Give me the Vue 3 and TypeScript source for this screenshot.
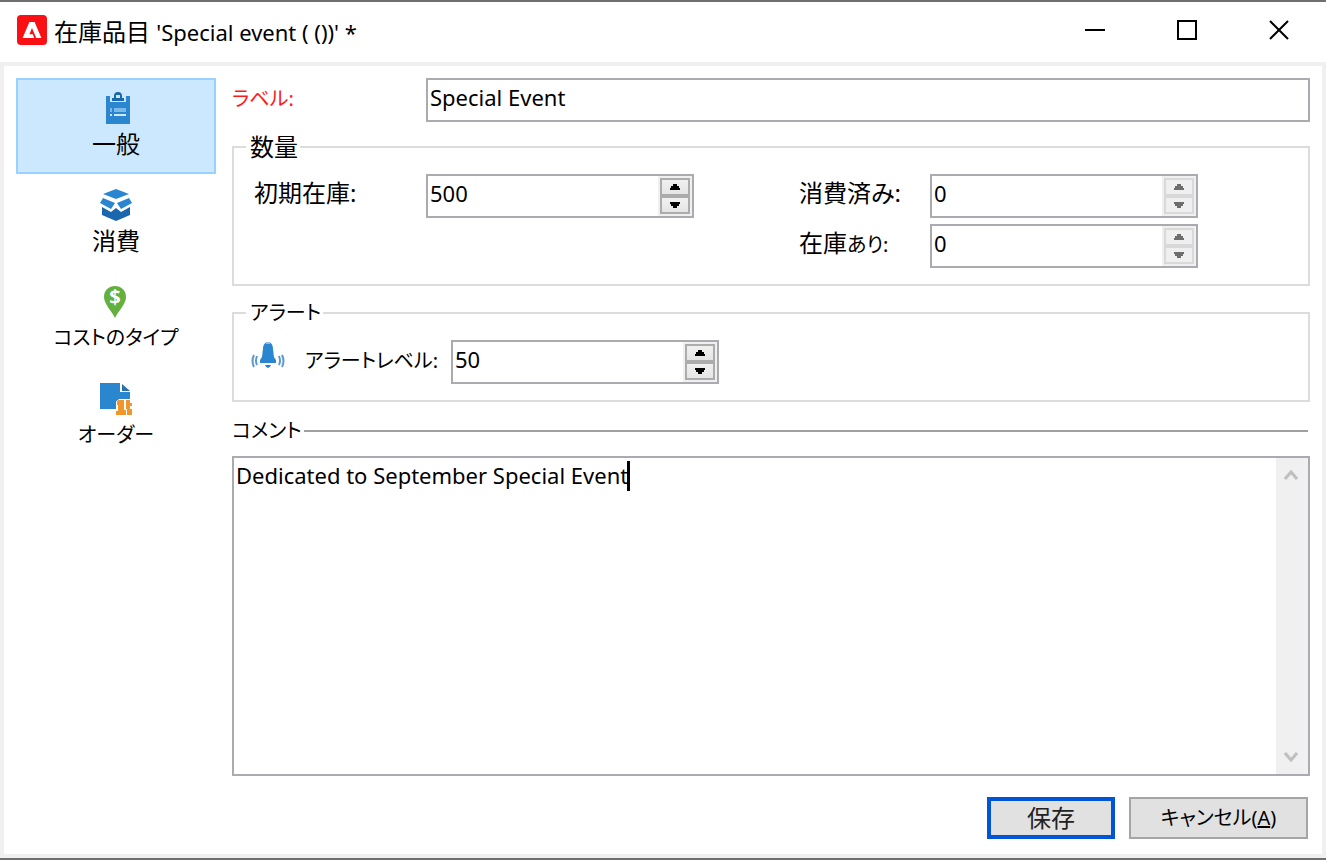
<script setup lang="ts">
import { nextTick, onMounted, ref, watch } from 'vue'

type TabId = 'general' | 'consumption' | 'costs' | 'orders'

interface Tab {
  id: TabId
  label: string
  kana: boolean
}

const tabs: Tab[] = [
  { id: 'general', label: '一般', kana: false },
  { id: 'consumption', label: '消費', kana: false },
  { id: 'costs', label: 'コストのタイプ', kana: true },
  { id: 'orders', label: 'オーダー', kana: true },
]

const activeTab = ref<TabId>('general')
const label = ref('Special Event')
const initialStock = ref(500)
const consumed = ref(0)
const available = ref(0)
const alertLevel = ref(50)
const comment = ref('Dedicated to September Special Event')

const commentBox = ref<HTMLTextAreaElement | null>(null)
const caretLeft = ref(0)

// Places the caret bar after the last character of the comment.
function placeCaret(): void {
  const box = commentBox.value
  const context = document.createElement('canvas').getContext('2d')
  if (!box || !context) return
  const style = getComputedStyle(box)
  context.font = `${style.fontSize} ${style.fontFamily}`
  const lastLine = comment.value.split('\n').pop() ?? ''
  caretLeft.value = Math.round(context.measureText(lastLine).width + parseFloat(style.paddingLeft)) - 1
}

onMounted(() => nextTick(placeCaret))
watch(comment, placeCaret)
</script>

<template>
  <div class="window">
    <header class="titlebar">
      <svg class="logo" viewBox="0 0 30 30" aria-hidden="true">
        <rect width="30" height="30" rx="4" fill="#fa0f14" />
        <path d="M12.4 7h5.2l6.8 16h-5.2l-4.2-10-2.6 6.2h3.4l1.4 3.8H5.6z" fill="#fff" />
      </svg>
      <h1 class="title">在庫品目 <span class="latin">'Special event ( ())' *</span></h1>
      <div class="window-controls">
        <button type="button" aria-label="最小化">
          <svg viewBox="0 0 20 20"><path d="M0 10h20" /></svg>
        </button>
        <button type="button" aria-label="最大化">
          <svg viewBox="0 0 20 20"><rect x="1" y="1" width="18" height="18" /></svg>
        </button>
        <button type="button" aria-label="閉じる">
          <svg viewBox="0 0 20 20"><path d="M1 1l18 18M19 1L1 19" /></svg>
        </button>
      </div>
    </header>

    <div class="body">
      <nav class="tabs">
        <button
          v-for="tab in tabs"
          :key="tab.id"
          type="button"
          class="tab"
          :class="{ active: tab.id === activeTab }"
          @click="activeTab = tab.id"
        >
          <svg v-if="tab.id === 'general'" class="icon" viewBox="0 0 32 32" aria-hidden="true">
            <path d="M6 4h4v6h16V4h4v28H6z" fill="#2a87cf" />
            <path d="M12 9V6h2V4q0-4 4-4t4 4v2h2v3zM16 3v3h4V3z" fill="#1a67ad" fill-rule="evenodd" />
            <path d="M10 16h2v4h-2zM14 16h12v4H14z" fill="#7db9e8" />
            <path d="M10 22h2v2h-2zM14 22h12v2H14z" fill="#cfe8fb" />
          </svg>
          <svg v-else-if="tab.id === 'consumption'" class="icon" viewBox="0 0 32 32" aria-hidden="true">
            <path d="M3 5l13-5 13 5-13 5z" fill="#2a87cf" />
            <path d="M3 9l12 5-4 6-11-6zM29 9l-12 5 4 6 11-6z" fill="#2a87cf" />
            <path d="M2 18l9 5 5-4 5 4 9-5v8l-14 6-14-6z" fill="#1a67ad" />
          </svg>
          <svg v-else-if="tab.id === 'costs'" class="icon" viewBox="0 0 32 32" aria-hidden="true">
            <path d="M15 0c6 0 11 4 11 11 0 7-7 13-11 21C11 24 4 18 4 11 4 4 9 0 15 0z" fill="#64b03f" />
            <text x="15" y="18" text-anchor="middle" class="coin-sign">$</text>
          </svg>
          <svg v-else class="icon" viewBox="0 0 32 32" aria-hidden="true">
            <path d="M0 0h20v9h10v7H19v2h-3v8H0z" fill="#2a87cf" />
            <path d="M22 1l8 7h-8z" fill="#2d6fa8" />
            <path
              d="M18 17h6v10h2v5H16v-4h2v-6h-1v-4zM26 17h4v3h2v3h-2v3h2v6h-5v-6h-1z"
              fill="#f0962a"
              stroke="#fff"
              stroke-width="1"
              paint-order="stroke"
            />
          </svg>
          <span :class="{ kana: tab.kana }">{{ tab.label }}</span>
        </button>
      </nav>

      <form class="main" @submit.prevent>
        <div class="label-row">
          <label class="required kana" for="item-label">ラベル:</label>
          <input id="item-label" v-model="label" class="field" type="text" />
        </div>

        <fieldset class="group quantity">
          <legend>数量</legend>
          <div class="quantity-grid">
            <label for="initial-stock">初期在庫:</label>
            <div class="spinner">
              <input id="initial-stock" v-model.number="initialStock" type="text" inputmode="numeric" />
              <div class="steps">
                <button type="button" aria-label="増やす" @click="initialStock++">
                  <svg viewBox="0 0 10 6"><path d="M3 0h4v2h2v2h1v2H0V4h1V2h2z" /></svg>
                </button>
                <button type="button" aria-label="減らす" @click="initialStock--">
                  <svg viewBox="0 0 10 6"><path d="M0 0h10v2H9v2H7v2H3V4H1V2H0z" /></svg>
                </button>
              </div>
            </div>
            <label class="second" for="consumed">消費済み:</label>
            <div class="spinner disabled">
              <input id="consumed" v-model.number="consumed" type="text" readonly />
              <div class="steps">
                <button type="button" aria-label="増やす" disabled>
                  <svg viewBox="0 0 10 6"><path d="M3 0h4v2h2v2h1v2H0V4h1V2h2z" /></svg>
                </button>
                <button type="button" aria-label="減らす" disabled>
                  <svg viewBox="0 0 10 6"><path d="M0 0h10v2H9v2H7v2H3V4H1V2H0z" /></svg>
                </button>
              </div>
            </div>
            <label class="second" for="available">在庫<span class="kana">あり:</span></label>
            <div class="spinner disabled">
              <input id="available" v-model.number="available" type="text" readonly />
              <div class="steps">
                <button type="button" aria-label="増やす" disabled>
                  <svg viewBox="0 0 10 6"><path d="M3 0h4v2h2v2h1v2H0V4h1V2h2z" /></svg>
                </button>
                <button type="button" aria-label="減らす" disabled>
                  <svg viewBox="0 0 10 6"><path d="M0 0h10v2H9v2H7v2H3V4H1V2H0z" /></svg>
                </button>
              </div>
            </div>
          </div>
        </fieldset>

        <fieldset class="group alert">
          <legend class="kana">アラート</legend>
          <div class="alert-row">
            <svg class="icon" viewBox="0 0 32 32" aria-hidden="true">
              <path d="M16 2c-3 0-5 3-5 7-1 5 0 8-3 11v3h16v-3c-3-3-2-6-3-11 0-4-2-7-5-7z" fill="#2a87cf" />
              <path d="M13 25h6q-1 3-3 3t-3-3z" fill="#2a87cf" />
              <path d="M14 2h4v2h-4z" fill="#8fc2ea" />
              <path
                d="M2 15q-3 6 0 12M5 16q-2 5 0 9M30 15q3 6 0 12M27 16q2 5 0 9"
                fill="none"
                stroke="#5c98cc"
                stroke-width="2"
              />
            </svg>
            <label class="kana" for="alert-level">アラートレベル:</label>
            <div class="spinner">
              <input id="alert-level" v-model.number="alertLevel" type="text" inputmode="numeric" />
              <div class="steps">
                <button type="button" aria-label="増やす" @click="alertLevel++">
                  <svg viewBox="0 0 10 6"><path d="M3 0h4v2h2v2h1v2H0V4h1V2h2z" /></svg>
                </button>
                <button type="button" aria-label="減らす" @click="alertLevel--">
                  <svg viewBox="0 0 10 6"><path d="M0 0h10v2H9v2H7v2H3V4H1V2H0z" /></svg>
                </button>
              </div>
            </div>
          </div>
        </fieldset>

        <div class="comment-head">
          <label class="kana" for="comment">コメント</label>
        </div>
        <div class="comment-box">
          <textarea id="comment" ref="commentBox" v-model="comment" spellcheck="false"></textarea>
          <span class="caret" :style="{ left: caretLeft + 'px' }"></span>
          <div class="scrollbar">
            <button type="button" aria-label="上へスクロール">
              <svg viewBox="0 0 14 12"><path d="M1 10l6-7 6 7" /></svg>
            </button>
            <button type="button" aria-label="下へスクロール">
              <svg viewBox="0 0 14 12"><path d="M1 2l6 7 6-7" /></svg>
            </button>
          </div>
        </div>

        <footer class="actions">
          <button type="submit" class="save">保存</button>
          <button type="button" class="cancel kana">キャンセル(<u>A</u>)</button>
        </footer>
      </form>
    </div>
  </div>
</template>

<style>
body {
  margin: 0;
}
</style>

<style scoped>
.window,
.window * {
  box-sizing: border-box;
}

.window {
  display: flex;
  flex-direction: column;
  min-height: 100vh;
  border-top: 2px solid #6f6f6f;
  border-bottom: 2px solid #6f6f6f;
  background: #fff;
  color: #000;
  font-family: 'Noto Sans', 'Noto Sans CJK JP', sans-serif;
  font-size: 24px;
  line-height: 30px;
  font-feature-settings: 'palt';
}

button,
input,
textarea {
  margin: 0;
  color: inherit;
  font: inherit;
  font-feature-settings: inherit;
  border-radius: 0;
}

input,
textarea,
.latin {
  font-size: 22px;
}

.kana {
  font-size: 20px;
}

.titlebar {
  display: flex;
  align-items: center;
  height: 60px;
  padding: 0 1px 4px 17px;
}

.logo {
  width: 30px;
  height: 30px;
}

.title {
  flex: 1;
  margin: 0 0 0 7px;
  padding-top: 4px;
  font-size: 24px;
  font-weight: 400;
  white-space: nowrap;
}

.window-controls {
  display: flex;
}

.window-controls button {
  display: grid;
  place-items: center;
  width: 92px;
  height: 56px;
  padding: 0;
  border: 0;
  background: none;
}

.window-controls svg {
  width: 20px;
  height: 20px;
  fill: none;
  stroke: #000;
  stroke-width: 2;
}

.body {
  flex: 1;
  display: flex;
  gap: 16px;
  border: 4px solid #f0f0f0;
  padding: 12px 12px 15px;
}

.tabs {
  display: flex;
  flex-direction: column;
  gap: 1px;
  width: 200px;
}

.tab {
  display: flex;
  flex-direction: column;
  align-items: center;
  gap: 5px;
  height: 96px;
  padding: 12px 0 0;
  border: 2px solid transparent;
  background: none;
  white-space: nowrap;
}

.tab.active {
  border-color: #99d1ff;
  background: #cce8ff;
}

.icon {
  flex: none;
  width: 32px;
  height: 32px;
  overflow: visible;
}

.coin-sign {
  fill: #fff;
  font-size: 20px;
  font-weight: 700;
}

.main {
  flex: 1;
  display: flex;
  flex-direction: column;
  min-width: 0;
}

.label-row {
  display: grid;
  grid-template-columns: 194px 1fr;
}

label {
  white-space: nowrap;
  padding-top: 4px;
}

label.kana {
  padding-top: 6px;
}

.required {
  color: #ff1a1a;
}

.field,
.spinner {
  height: 44px;
  border: 2px solid #abaab1;
  background: #fff;
}

.field {
  width: 100%;
  padding: 0 2px 6px;
  outline: 0;
}

.group {
  min-width: 0;
  margin: 10px 0 0;
  padding: 12px 12px 16px 20px;
  border: 2px solid #dcdcdc;
}

.group.alert {
  margin-top: 12px;
}

legend {
  margin-left: -8px;
  padding: 0 2px 0 4px;
  line-height: 30px;
}

.quantity-grid {
  display: grid;
  grid-template-columns: 172px 268px 105px 131px 268px;
  row-gap: 6px;
}

.second {
  grid-column: 4;
}

.spinner {
  display: flex;
  width: 268px;
}

.spinner input {
  flex: 1;
  min-width: 0;
  padding: 0 2px 6px;
  border: 0;
  background: none;
  outline: 0;
}

.steps {
  display: flex;
  flex-direction: column;
  width: 34px;
  padding: 2px;
  background: #f0f0f0;
}

.steps button {
  flex: 1;
  display: grid;
  place-items: center;
  padding: 0;
  border: 2px solid #acacac;
  background: linear-gradient(#f0f0f0, #e5e5e5);
}

.steps svg {
  width: 10px;
  height: 6px;
  fill: #000;
  shape-rendering: crispEdges;
}

.disabled .steps button {
  border-color: #d9d9d9;
  background: #efefef;
}

.disabled .steps svg {
  fill: #6d6d6d;
}

.alert-row {
  display: grid;
  grid-template-columns: 51px 146px 268px;
}

.alert-row .icon {
  margin-left: -2px;
}

.comment-head {
  display: flex;
  align-items: center;
  margin: 14px 2px 10px 0;
}

.comment-head label {
  padding: 0;
}

.comment-head::after {
  content: '';
  flex: 1;
  height: 2px;
  margin-left: 2px;
  background: #a0a0a0;
}

.comment-box {
  position: relative;
  flex: 1;
  display: flex;
  min-height: 120px;
  border: 2px solid #abaab1;
}

textarea {
  flex: 1;
  min-width: 0;
  padding: 2px;
  border: 0;
  outline: 0;
  background: none;
  resize: none;
  overflow: hidden;
}

.caret {
  position: absolute;
  top: 3px;
  width: 3px;
  height: 30px;
  background: #000;
}

.scrollbar {
  display: flex;
  flex-direction: column;
  justify-content: space-between;
  width: 32px;
  background: #f0f0f0;
}

.scrollbar button {
  display: grid;
  place-items: center;
  width: 30px;
  height: 34px;
  padding: 0;
  border: 0;
  background: none;
}

.scrollbar svg {
  width: 14px;
  height: 12px;
  fill: none;
  stroke: #bfbfbf;
  stroke-width: 3;
}

.actions {
  display: flex;
  justify-content: flex-end;
  gap: 14px;
  margin: 21px 2px 0 0;
}

.actions button {
  height: 42px;
  padding: 0;
  background: #e1e1e1;
  white-space: nowrap;
}

.save {
  width: 128px;
  border: 4px solid #0055d6;
  color: #222;
}

.cancel {
  width: 179px;
  border: 2px solid #a5a5a5;
}
</style>
